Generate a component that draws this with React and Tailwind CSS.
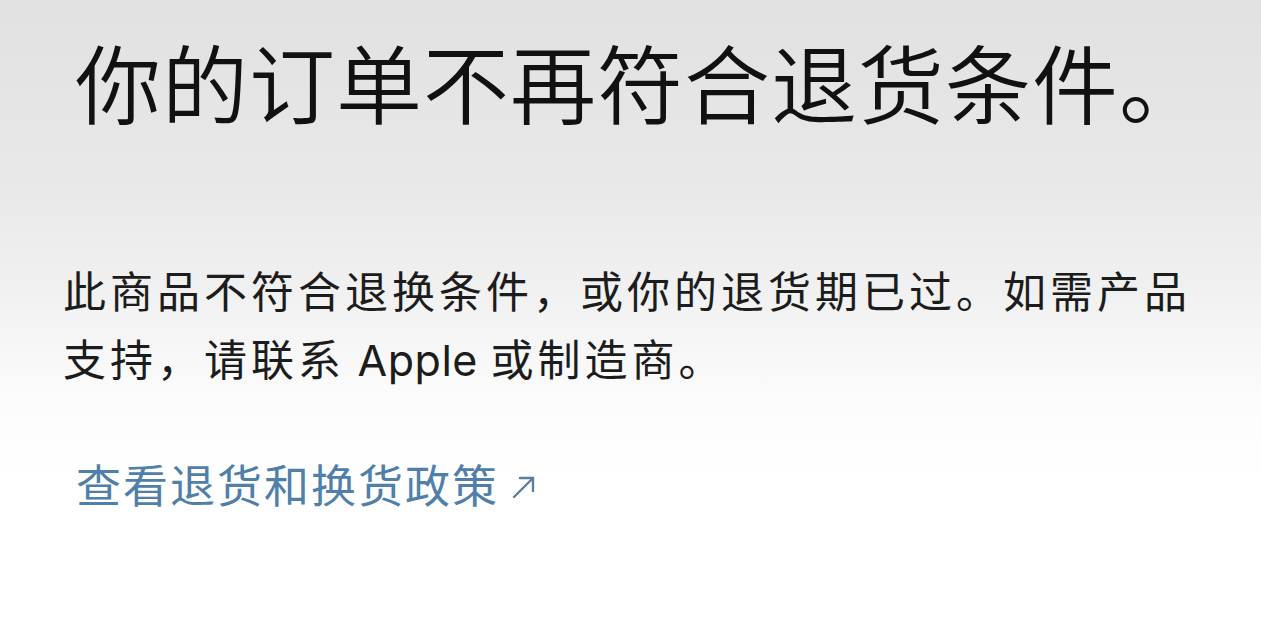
export default function App() {
  return (
    <div
      className="w-[1261px] h-[632px] overflow-hidden bg-[linear-gradient(to_bottom,#e1e1e1_0%,#e8e8e8_28%,#f0f0f0_45%,#fbfbfb_62%,#ffffff_75%,#ffffff_100%)] flex flex-col"
      style={{ fontFamily: '"Noto Sans CJK SC", "Noto Sans", sans-serif' }}
    >
      <h1 className="mt-[38px] pl-[75px] text-[86px] leading-none font-[350] tracking-[1px] text-[#111111] whitespace-nowrap">
        你的订单不再符合退货条件。
      </h1>
      <p className="mt-[131px] pl-[63px] text-[43px] leading-[68px] tracking-[4px] text-[#1c1c1c] whitespace-nowrap">
        此商品不符合退换条件，或你的退货期已过。如需产品
        <br />
        支持，请联系
        <span className="font-['Inter',sans-serif] tracking-[0.5px]"> Apple </span>
        或制造商。
      </p>
      <a
        href="#"
        className="mt-[67px] pl-[76px] flex items-center text-[45px] leading-none tracking-[2px] text-[#507fa9] whitespace-nowrap"
      >
        查看退货和换货政策
        <svg
          className="ml-[12px] mt-[6px]"
          width="26"
          height="26"
          viewBox="0 0 26 26"
          fill="none"
          stroke="#5a7fa0"
          strokeWidth="2.4"
          strokeLinecap="round"
          strokeLinejoin="round"
        >
          <path d="M3 23 L22 4" />
          <path d="M9 4 H22 V17" />
        </svg>
      </a>
    </div>
  );
}
